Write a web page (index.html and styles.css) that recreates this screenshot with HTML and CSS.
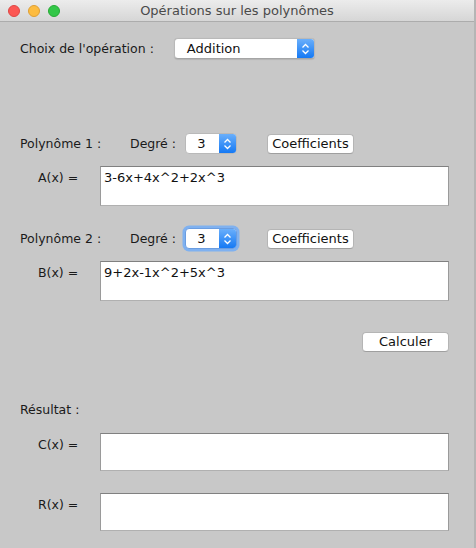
FILE: index.html
```html
<!DOCTYPE html>
<html lang="fr">
<head>
<meta charset="utf-8">
<title>Opérations sur les polynômes</title>
<link rel="stylesheet" href="styles.css">
</head>
<body>
<div class="window">
  <div class="titlebar">
    <div class="lights">
      <span class="light red"></span>
      <span class="light yellow"></span>
      <span class="light green"></span>
    </div>
    <div class="title">Opérations sur les polynômes</div>
  </div>
  <div class="content">
    <div class="row op-row">
      <span class="label">Choix de l'opération :</span>
      <div class="popup">
        <span class="popup-text">Addition</span>
        <span class="arrows"><svg width="9" height="12" viewBox="0 0 9 12"><path d="M1.5 4.5 L4.5 1.5 L7.5 4.5 M1.5 7.5 L4.5 10.5 L7.5 7.5" fill="none" stroke="#fff" stroke-width="1.3"/></svg></span>
      </div>
    </div>

    <div class="row poly-row poly1">
      <span class="label poly-label">Polynôme 1 :</span>
      <span class="label deg-label">Degré :</span>
      <div class="spinner">
        <span class="spin-val">3</span>
        <span class="arrows"><svg width="9" height="12" viewBox="0 0 9 12"><path d="M1.5 4.5 L4.5 1.5 L7.5 4.5 M1.5 7.5 L4.5 10.5 L7.5 7.5" fill="none" stroke="#fff" stroke-width="1.3"/></svg></span>
      </div>
      <button class="btn coef">Coefficients</button>
    </div>

    <div class="row field-row fa">
      <span class="label field-label">A(x) =</span>
      <div class="field">3-6x+4x^2+2x^3</div>
    </div>

    <div class="row poly-row poly2">
      <span class="label poly-label">Polynôme 2 :</span>
      <span class="label deg-label">Degré :</span>
      <div class="spinner focused">
        <span class="spin-val">3</span>
        <span class="arrows"><svg width="9" height="12" viewBox="0 0 9 12"><path d="M1.5 4.5 L4.5 1.5 L7.5 4.5 M1.5 7.5 L4.5 10.5 L7.5 7.5" fill="none" stroke="#fff" stroke-width="1.3"/></svg></span>
      </div>
      <button class="btn coef">Coefficients</button>
    </div>

    <div class="row field-row fb">
      <span class="label field-label">B(x) =</span>
      <div class="field">9+2x-1x^2+5x^3</div>
    </div>

    <div class="row calc-row">
      <button class="btn calc">Calculer</button>
    </div>

    <div class="row res-row">
      <span class="label">Résultat :</span>
    </div>

    <div class="row field-row fc">
      <span class="label field-label">C(x) =</span>
      <div class="field short"></div>
    </div>

    <div class="row field-row fr">
      <span class="label field-label">R(x) =</span>
      <div class="field short"></div>
    </div>
  </div>
</div>
</body>
</html>
```

FILE: styles.css
```css
* { box-sizing: border-box; }
html, body {
  margin: 0;
  padding: 0;
  width: 476px;
  height: 548px;
  overflow: hidden;
  background: #c8c8c8;
  font-family: "DejaVu Sans", "Liberation Sans", sans-serif;
  font-size: 12.5px;
  color: #1a1a1a;
}
.window {
  width: 476px;
  height: 548px;
  display: flex;
  flex-direction: column;
  border-right: 2px solid #b5b5b5;
}
.titlebar {
  height: 22px;
  flex: none;
  position: relative;
  background: linear-gradient(#ececec, #d6d6d6);
  border-bottom: 1px solid #acacac;
  display: flex;
  align-items: center;
  justify-content: center;
}
.lights {
  position: absolute;
  left: 8px;
  top: 5px;
  display: flex;
  gap: 8px;
}
.light {
  width: 12px;
  height: 12px;
  border-radius: 50%;
}
.red { background: #fc5753; border: 1px solid #de4744; }
.yellow { background: #fdbc40; border: 1px solid #de9f34; }
.green { background: #33c748; border: 1px solid #27aa35; }
.title {
  font-size: 13px;
  color: #4a4a4a;
}
.content {
  padding-left: 20px;
  display: flex;
  flex-direction: column;
}
.row {
  display: flex;
  align-items: center;
}
.op-row { margin-top: 16px; height: 21px; }
.popup {
  margin-left: 20px;
  width: 141px;
  height: 21px;
  display: flex;
  background: #fff;
  border-radius: 4px;
  border: 1px solid #b9b9b9;
  border-bottom-color: #a5a5a5;
  overflow: hidden;
  box-shadow: 0 0.5px 1px rgba(0,0,0,0.1);
}
.popup-text {
  flex: 1;
  padding-left: 12px;
  line-height: 19px;
  font-size: 13px;
  color: #111;
}
.arrows {
  width: 17px;
  display: flex;
  align-items: center;
  justify-content: center;
  background: linear-gradient(#6aaffb, #1579f4);
}
.poly1 { margin-top: 74px; }
.poly-row { height: 21px; }
.poly-label { width: 110px; }
.deg-label { width: 55px; }
.spinner {
  width: 52px;
  height: 21px;
  display: flex;
  background: #fff;
  border-radius: 4px;
  border: 1px solid #b9b9b9;
  overflow: hidden;
}
.spinner.focused {
  box-shadow: 0 0 0 2.5px #7fb1f0;
  border-color: #6b9de0;
}
.spin-val {
  flex: 1;
  text-align: center;
  line-height: 19px;
  font-size: 13px;
  color: #111;
  padding-right: 2px;
}
.btn {
  font-family: inherit;
  font-size: 13px;
  color: #111;
  background: #fff;
  border: 1px solid #b5b5b5;
  border-bottom-color: #9f9f9f;
  border-radius: 4px;
  padding: 0;
  height: 20px;
  line-height: 18px;
}
.coef {
  margin-left: 30px;
  width: 87px;
}
.field-row { align-items: flex-start; }
.field-label {
  width: 80px;
  padding-left: 18px;
  padding-top: 4px;
}
.field {
  width: 349px;
  height: 40px;
  background: #fff;
  border: 1px solid #9a9a9a;
  border-top-color: #808080;
  border-bottom-color: #b0b0b0;
  padding: 3px 0 0 3px;
  font-size: 13px;
  color: #111;
}
.field.short { height: 38px; }
.fa { margin-top: 12px; }
.poly2 { margin-top: 22px; }
.fb { margin-top: 12px; }
.calc-row {
  margin-top: 31px;
  justify-content: flex-end;
  padding-right: 25px;
}
.calc { width: 87px; }
.res-row { margin-top: 49px; height: 16px; }
.fc { margin-top: 16px; }
.fr { margin-top: 22px; }
```
